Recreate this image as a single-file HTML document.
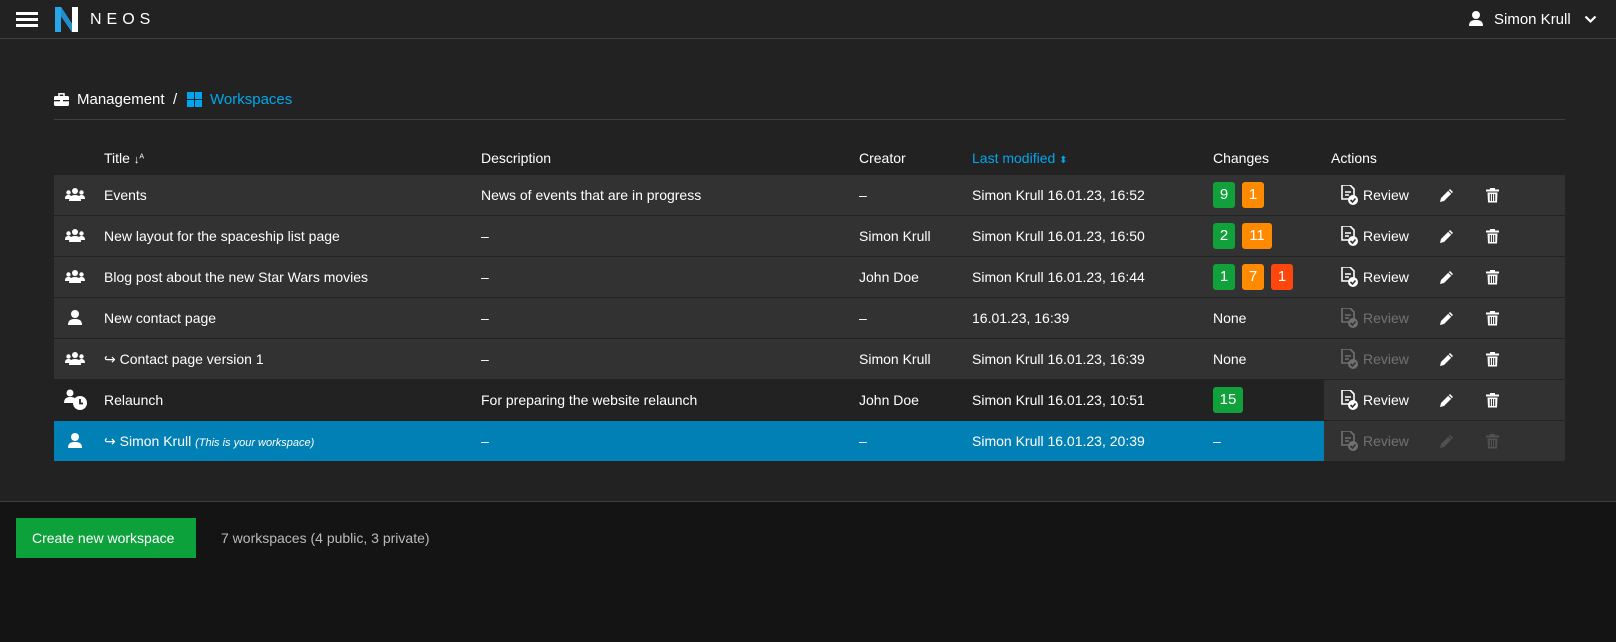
<!DOCTYPE html>
<html><head><style>
*{margin:0;padding:0;box-sizing:border-box}
body{width:1616px;height:642px;background:#222;font-family:"Liberation Sans",sans-serif;color:#fff;font-size:14px;position:relative;overflow:hidden}
.a{position:absolute;white-space:nowrap}
.top{position:absolute;left:0;top:0;width:1616px;height:39px;background:#222;border-bottom:1px solid #3f3f3f}
.row{position:absolute;left:54px;width:1511px;height:40px;background:#323232}
.row .a{top:12px}
.badge{position:absolute;top:7px;height:26px;border-radius:3px;color:#fff;font-size:15px;text-align:center;line-height:26px}
.g{background:#10a13a}.o{background:#ff8a00}.r{background:#ff460d}
.dim{opacity:.3}
</style></head><body>
<div class="top">
 <div class="a" style="left:16px;top:12px;width:22px;height:3px;background:#fff;box-shadow:0 6px 0 #fff,0 12px 0 #fff"></div>
 <svg class="a" style="left:55px;top:7px" width="23" height="25" viewBox="0 0 23 25"><path d="M0 0h6l11 17V0h6v25h-6L6 9v16H0z" fill="#fff"/><path d="M0 0h6v25H0z" fill="#26a6e8"/><path d="M6 0l11 17v8L6 9z" fill="#1b8fd0"/></svg>
 <div class="a" style="left:90px;top:11px;font-size:16px;letter-spacing:5px">NEOS</div>
 <svg class="a" style="left:1469px;top:11px" width="14" height="15" viewBox="0 0 14 15"><circle cx="7" cy="4" r="4" fill="#fff"/><path d="M0 15c0-5 3-6 7-6s7 1 7 6z" fill="#fff"/></svg>
 <div class="a" style="left:1494px;top:11px;font-size:15px">Simon Krull</div>
 <svg class="a" style="left:1584px;top:15px" width="13" height="9" viewBox="0 0 13 9"><path d="M1.5 1.5l5 5 5-5" stroke="#fff" stroke-width="2.2" fill="none"/></svg>
</div>
<svg class="a" style="left:54px;top:93px" width="15" height="13" viewBox="0 0 15 13"><rect x="0" y="3" width="15" height="10" rx="1.5" fill="#fff"/><rect x="5" y="0.8" width="5" height="3" fill="none" stroke="#fff" stroke-width="1.5"/><rect x="0" y="7" width="15" height="1.3" fill="#222"/><rect x="6" y="6" width="3" height="3" fill="#fff"/></svg>
<div class="a" style="left:77px;top:91px;font-size:15px">Management</div>
<div class="a" style="left:173px;top:91px;font-size:15px">/</div>
<svg class="a" style="left:187px;top:92px" width="15" height="15"><rect width="7" height="7" fill="#00a6ed"/><rect x="8" width="7" height="7" fill="#00a6ed"/><rect y="8" width="7" height="7" fill="#00a6ed"/><rect x="8" y="8" width="7" height="7" fill="#00a6ed"/></svg>
<div class="a" style="left:210px;top:91px;font-size:15px;color:#00a6ed">Workspaces</div>
<div class="a" style="left:54px;top:119px;width:1511px;height:1px;background:#3f3f3f"></div>

<div class="a" style="left:104px;top:150px">Title <span style="font-size:11px">↓<sup style="font-size:7px">A</sup></span></div>
<div class="a" style="left:481px;top:150px">Description</div>
<div class="a" style="left:859px;top:150px">Creator</div>
<div class="a" style="left:972px;top:150px;color:#00a6ed">Last modified <span style="font-size:10px">⬍</span></div>
<div class="a" style="left:1213px;top:150px">Changes</div>
<div class="a" style="left:1331px;top:150px">Actions</div>

<svg width="0" height="0" style="position:absolute"><defs>
<g id="grp"><circle cx="10" cy="3" r="3" fill="#fff"/><circle cx="3.5" cy="4.5" r="2.2" fill="#fff"/><circle cx="16.5" cy="4.5" r="2.2" fill="#fff"/><path d="M4 13c0-4 2-6 6-6s6 2 6 6z" fill="#fff"/><path d="M0 11c0-3 1-4 3.5-4s3 1 3 4zM13.5 11c0-3 1-4 3-4s3.5 1 3.5 4z" fill="#fff"/></g>
<g id="usr"><circle cx="7" cy="4" r="4" fill="#fff"/><path d="M0 15c0-5 3-6 7-6s7 1 7 6z" fill="#fff"/></g>
<g id="rev"><path d="M1 0h8l4 4v10H1z" fill="none" stroke="#fff" stroke-width="1.6"/><path d="M4 7h6M4 10h4" stroke="#fff" stroke-width="1.4"/><circle cx="12" cy="15" r="5" fill="#fff"/><path d="M9.5 15l2 2 3-3.5" stroke="#323232" stroke-width="1.6" fill="none"/></g>
<g id="pen"><path d="M11 1l3 3-9 9-4 1 1-4z" fill="#fff"/><path d="M9.5 2.5l3 3" stroke="#323232" stroke-width="1"/></g>
<g id="trash"><rect x="0" y="1.5" width="13" height="2" fill="#fff"/><rect x="4" y="0" width="5" height="2" fill="#fff"/><path d="M1.5 4.5h10l-0.5 10h-9z" fill="#fff"/><path d="M4.3 6v7M6.5 6v7M8.7 6v7" stroke="#323232" stroke-width="1.1"/></g>
</defs></svg>

<!-- rows -->
<div class="row" style="top:175px">
 <svg class="a" style="left:11px;top:13px" width="20" height="14"><use href="#grp"/></svg>
 <div class="a" style="left:50px">Events</div><div class="a" style="left:427px">News of events that are in progress</div>
 <div class="a" style="left:805px">–</div><div class="a" style="left:918px">Simon Krull 16.01.23, 16:52</div>
 <div class="badge g" style="left:1159px;width:22px">9</div><div class="badge o" style="left:1188px;width:22px">1</div>
 <svg class="a" style="left:1287px;top:10px" width="18" height="21"><use href="#rev"/></svg><div class="a" style="left:1309px">Review</div>
 <svg class="a" style="left:1385px;top:13px" width="15" height="15"><use href="#pen"/></svg>
 <svg class="a" style="left:1432px;top:13px" width="13" height="15"><use href="#trash"/></svg>
</div>
<div class="row" style="top:216px">
 <svg class="a" style="left:11px;top:13px" width="20" height="14"><use href="#grp"/></svg>
 <div class="a" style="left:50px">New layout for the spaceship list page</div><div class="a" style="left:427px">–</div>
 <div class="a" style="left:805px">Simon Krull</div><div class="a" style="left:918px">Simon Krull 16.01.23, 16:50</div>
 <div class="badge g" style="left:1159px;width:22px">2</div><div class="badge o" style="left:1188px;width:30px">11</div>
 <svg class="a" style="left:1287px;top:10px" width="18" height="21"><use href="#rev"/></svg><div class="a" style="left:1309px">Review</div>
 <svg class="a" style="left:1385px;top:13px" width="15" height="15"><use href="#pen"/></svg>
 <svg class="a" style="left:1432px;top:13px" width="13" height="15"><use href="#trash"/></svg>
</div>
<div class="row" style="top:257px">
 <svg class="a" style="left:11px;top:13px" width="20" height="14"><use href="#grp"/></svg>
 <div class="a" style="left:50px">Blog post about the new Star Wars movies</div><div class="a" style="left:427px">–</div>
 <div class="a" style="left:805px">John Doe</div><div class="a" style="left:918px">Simon Krull 16.01.23, 16:44</div>
 <div class="badge g" style="left:1159px;width:22px">1</div><div class="badge o" style="left:1188px;width:22px">7</div><div class="badge r" style="left:1217px;width:22px">1</div>
 <svg class="a" style="left:1287px;top:10px" width="18" height="21"><use href="#rev"/></svg><div class="a" style="left:1309px">Review</div>
 <svg class="a" style="left:1385px;top:13px" width="15" height="15"><use href="#pen"/></svg>
 <svg class="a" style="left:1432px;top:13px" width="13" height="15"><use href="#trash"/></svg>
</div>
<div class="row" style="top:298px">
 <svg class="a" style="left:14px;top:12px" width="14" height="15"><use href="#usr"/></svg>
 <div class="a" style="left:50px">New contact page</div><div class="a" style="left:427px">–</div>
 <div class="a" style="left:805px">–</div><div class="a" style="left:918px">16.01.23, 16:39</div>
 <div class="a" style="left:1159px">None</div>
 <g></g><svg class="a dim" style="left:1287px;top:10px" width="18" height="21"><use href="#rev"/></svg><div class="a dim" style="left:1309px">Review</div>
 <svg class="a" style="left:1385px;top:13px" width="15" height="15"><use href="#pen"/></svg>
 <svg class="a" style="left:1432px;top:13px" width="13" height="15"><use href="#trash"/></svg>
</div>
<div class="row" style="top:339px">
 <svg class="a" style="left:11px;top:13px" width="20" height="14"><use href="#grp"/></svg>
 <div class="a" style="left:50px">↪ Contact page version 1</div><div class="a" style="left:427px">–</div>
 <div class="a" style="left:805px">Simon Krull</div><div class="a" style="left:918px">Simon Krull 16.01.23, 16:39</div>
 <div class="a" style="left:1159px">None</div>
 <svg class="a dim" style="left:1287px;top:10px" width="18" height="21"><use href="#rev"/></svg><div class="a dim" style="left:1309px">Review</div>
 <svg class="a" style="left:1385px;top:13px" width="15" height="15"><use href="#pen"/></svg>
 <svg class="a" style="left:1432px;top:13px" width="13" height="15"><use href="#trash"/></svg>
</div>
<div class="row" style="top:380px;background:#222">
 <div class="a" style="left:1270px;top:0;width:241px;height:40px;background:#323232"></div>
 <svg class="a" style="left:10px;top:9px" width="24" height="22" viewBox="0 0 24 22"><circle cx="6" cy="4" r="3.5" fill="#fff"/><path d="M0 14c0-4 2-6 6-6s5 1 6 3v3z" fill="#fff"/><circle cx="16" cy="14" r="7" fill="#fff"/><path d="M16 10v4.5h3" stroke="#222" stroke-width="1.8" fill="none"/></svg>
 <div class="a" style="left:50px">Relaunch</div><div class="a" style="left:427px">For preparing the website relaunch</div>
 <div class="a" style="left:805px">John Doe</div><div class="a" style="left:918px">Simon Krull 16.01.23, 10:51</div>
 <div class="badge g" style="left:1159px;width:30px">15</div>
 <svg class="a" style="left:1287px;top:10px" width="18" height="21"><use href="#rev"/></svg><div class="a" style="left:1309px">Review</div>
 <svg class="a" style="left:1385px;top:13px" width="15" height="15"><use href="#pen"/></svg>
 <svg class="a" style="left:1432px;top:13px" width="13" height="15"><use href="#trash"/></svg>
</div>
<div class="row" style="top:421px;background:#0080b4">
 <div class="a" style="left:1270px;top:0;width:241px;height:40px;background:#323232"></div>
 <svg class="a" style="left:14px;top:12px" width="14" height="15"><use href="#usr"/></svg>
 <div class="a" style="left:50px">↪ Simon Krull <i style="font-size:11px">(This is your workspace)</i></div><div class="a" style="left:427px">–</div>
 <div class="a" style="left:805px">–</div><div class="a" style="left:918px">Simon Krull 16.01.23, 20:39</div>
 <div class="a" style="left:1159px">–</div>
 <svg class="a dim" style="left:1287px;top:10px" width="18" height="21"><use href="#rev"/></svg><div class="a dim" style="left:1309px">Review</div>
 <svg class="a" style="left:1385px;top:13px;opacity:.15" width="15" height="15"><use href="#pen"/></svg>
 <svg class="a" style="left:1432px;top:13px;opacity:.15" width="13" height="15"><use href="#trash"/></svg>
</div>

<div class="a" style="left:0;top:501px;width:1616px;height:141px;background:#141414;border-top:1px solid #3f3f3f"></div>
<div class="a" style="left:16px;top:518px;width:180px;height:40px;background:#0ca13a"></div>
<div class="a" style="left:32px;top:530px">Create new workspace</div>
<div class="a" style="left:221px;top:530px;color:#bbb">7 workspaces (4 public, 3 private)</div>
</body></html>
